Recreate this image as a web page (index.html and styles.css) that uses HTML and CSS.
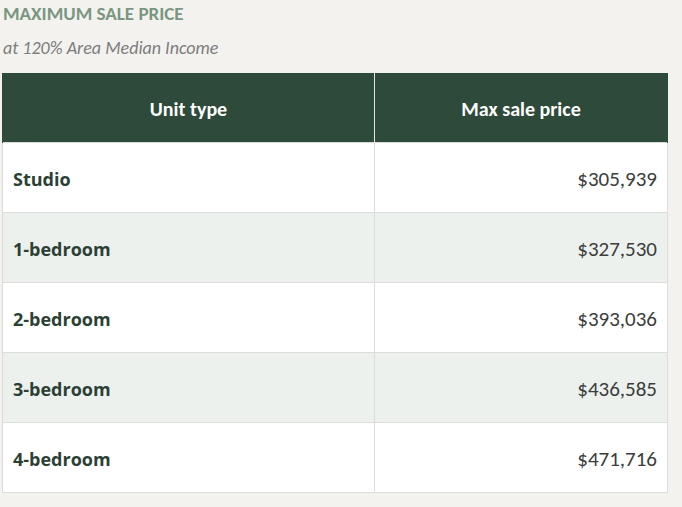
FILE: index.html
```html
<!DOCTYPE html>
<html>
<head>
<meta charset="utf-8">
<link rel="stylesheet" href="styles.css">
</head>
<body>
<div class="wrap">
  <h2 class="title">MAXIMUM SALE PRICE</h2>
  <p class="sub">at 120% Area Median Income</p>
  <table class="price-table">
    <thead>
      <tr><th>Unit type</th><th>Max sale price</th></tr>
    </thead>
    <tbody>
      <tr><td class="label">Studio</td><td class="price">$305,939</td></tr>
      <tr><td class="label">1-bedroom</td><td class="price">$327,530</td></tr>
      <tr><td class="label">2-bedroom</td><td class="price">$393,036</td></tr>
      <tr><td class="label">3-bedroom</td><td class="price">$436,585</td></tr>
      <tr><td class="label">4-bedroom</td><td class="price">$471,716</td></tr>
    </tbody>
  </table>
</div>
</body>
</html>
```
FILE: styles.css
```css
html, body {
  margin: 0;
  padding: 0;
  background: #f3f2ee;
}
.wrap {
  padding: 3px 14px 0 2px;
}
.title {
  margin: 0 0 0 1px;
  font-family: Carlito, Calibri, Lato, "Liberation Sans", sans-serif;
  font-weight: 700;
  font-size: 19px;
  line-height: 22px;
  color: #7a9683;
}
.sub {
  margin: 13px 0 0 1px;
  font-family: Carlito, Calibri, Lato, "Liberation Sans", sans-serif;
  font-style: italic;
  font-size: 18px;
  line-height: 20px;
  color: #7d7d7d;
}
.price-table {
  margin-top: 15px;
  width: 666px;
  border-collapse: collapse;
  table-layout: fixed;
}
.price-table th {
  background: #2e4a3a;
  color: #ffffff;
  height: 67px;
  padding: 2px 0 0;
  font-family: Carlito, Calibri, Lato, "Liberation Sans", sans-serif;
  font-weight: 700;
  font-size: 20px;
  text-align: center;
  border-left: 1px solid #e4e4e4;
  border-right: 1px solid #e4e4e4;
}
.price-table th:first-child {
  width: 371px;
  border-left: 1px solid #2e4a3a;
}
.price-table th:last-child {
  border-right: 1px solid #2e4a3a;
}
.price-table td {
  height: 67px;
  padding: 2px 10px 0;
  border: 1px solid #dcdcda;
  background: #ffffff;
}
.price-table tbody tr:nth-child(even) td {
  background: #edf1ed;
}
.label {
  font-family: "Open Sans", "DejaVu Sans", sans-serif;
  font-weight: 700;
  font-size: 18px;
  color: #2c3f35;
}
.price {
  text-align: right;
  font-family: Carlito, Calibri, Lato, "Liberation Sans", sans-serif;
  font-size: 21px;
  color: #3a3d3c;
}
```
